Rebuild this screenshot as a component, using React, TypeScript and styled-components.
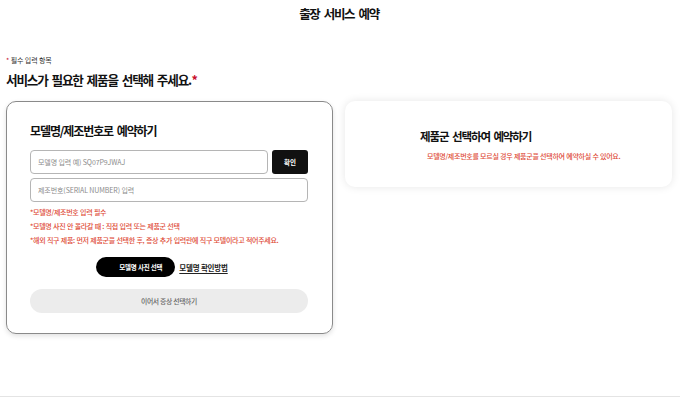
import React from "react";
import styled, { createGlobalStyle } from "styled-components";

const Global = createGlobalStyle`
  html, body { margin: 0; padding: 0; background: #fff; }
  body { font-family: "Noto Sans CJK KR", "Noto Sans", sans-serif; color: #111; }
  * { box-sizing: border-box; }
`;

const Page = styled.div`
  width: 680px;
  height: 397px;
  border-bottom: 1px solid #e4e4e4;
  display: flex;
  flex-direction: column;
  padding: 0 8px 0 6px;
`;

const PageTitle = styled.h1`
  margin: 0;
  height: 28px;
  line-height: 28px;
  text-align: center;
  font-size: 12.5px;
  font-weight: 700;
  letter-spacing: -1.4px;
  word-spacing: 3px;
  color: #111;
`;

const RequiredNote = styled.div`
  margin-top: 27px;
  font-size: 7px;
  line-height: 10px;
  color: #333;
  letter-spacing: -0.1px;
`;

const Star = styled.span<{ $gap?: number }>`
  color: #c8102e;
  margin-left: ${(p) => p.$gap ?? 0}px;
`;

const Heading = styled.h2`
  margin: 6px 0 0;
  font-size: 12.6px;
  line-height: 18px;
  font-weight: 700;
  letter-spacing: -1.2px;
  word-spacing: 2.3px;
  color: #111;
`;

const Period = styled.span`
  letter-spacing: -0.5px;
`;

const CardRow = styled.div`
  margin-top: 12px;
  display: flex;
  gap: 12px;
  align-items: flex-start;
`;

const ModelCard = styled.section`
  width: 327px;
  border: 1px solid #8a8a8a;
  border-radius: 10px;
  padding: 21px 24px 20px 23px;
  box-shadow: 0 2px 5px rgba(0, 0, 0, 0.12);
  display: flex;
  flex-direction: column;
`;

const GroupCard = styled.section`
  width: 327px;
  height: 86px;
  border-radius: 10px;
  box-shadow: 0 0 8px rgba(0, 0, 0, 0.1);
  padding: 27px 0 0 75px;
  display: flex;
  flex-direction: column;
`;

const CardTitle = styled.h3<{ $size?: number }>`
  margin: 0;
  font-size: ${(p) => p.$size ?? 12}px;
  line-height: 16px;
  font-weight: 700;
  letter-spacing: -1.1px;
  word-spacing: 2px;
  color: #111;
`;

const InputRow = styled.div<{ $mt: number }>`
  margin-top: ${(p) => p.$mt}px;
  display: flex;
  gap: 4px;
`;

const TextInput = styled.input`
  flex: 1;
  min-width: 0;
  height: 24px;
  border: 1px solid #b5b5b5;
  border-radius: 4px;
  padding: 0 7px;
  font-family: inherit;
  font-size: 7px;
  letter-spacing: -0.1px;
  color: #333;
  outline: none;
  &::placeholder { color: #8c8c8c; }
`;

const ConfirmButton = styled.button`
  width: 36px;
  height: 24px;
  border: none;
  border-radius: 3px;
  background: #111;
  color: #fff;
  font-family: inherit;
  font-size: 6.5px;
  font-weight: 700;
  padding: 0;
`;

const Notes = styled.div`
  margin-top: 3px;
  display: flex;
  flex-direction: column;
`;

const Note = styled.p<{ $indent?: number }>`
  margin: 0 0 0 ${(p) => p.$indent ?? 0}px;
  font-size: 7px;
  line-height: 14px;
  letter-spacing: -0.3px;
  word-spacing: 0.3px;
  color: #de4a36;
  font-weight: 500;
  white-space: nowrap;
`;

const ActionRow = styled.div`
  margin-top: 10px;
  display: flex;
  justify-content: center;
  align-items: center;
  gap: 4px;
  padding-right: 14px;
`;

const PhotoButton = styled.button`
  width: 79px;
  height: 20px;
  border: none;
  border-radius: 10px;
  background: #000;
  color: #fff;
  font-family: inherit;
  font-size: 6.5px;
  font-weight: 700;
  letter-spacing: -0.2px;
  padding: 0 0 0 10px;
`;

const HelpLink = styled.a`
  font-size: 7.5px;
  font-weight: 700;
  letter-spacing: -0.2px;
  color: #222;
  text-decoration: underline;
  text-underline-offset: 1.5px;
`;

const NextButton = styled.button`
  margin-top: 12px;
  width: 100%;
  height: 24px;
  border: none;
  border-radius: 12px;
  background: #ececec;
  color: #666;
  font-family: inherit;
  font-size: 6.8px;
  font-weight: 500;
  letter-spacing: -0.3px;
`;

const GroupSub = styled.div`
  margin-top: 5px;
`;

export default function App() {
  return (
    <>
      <Global />
      <Page>
        <PageTitle>출장 서비스 예약</PageTitle>
        <RequiredNote>
          <Star>*</Star> 필수 입력 항목
        </RequiredNote>
        <Heading>
          서비스가 필요한 제품을 선택해 주세요<Period>.</Period>
          <Star>*</Star>
        </Heading>
        <CardRow>
          <ModelCard>
            <CardTitle>모델명/제조번호로 예약하기</CardTitle>
            <InputRow $mt={11}>
              <TextInput placeholder="모델명 입력 예) SQ07P9JWAJ" />
              <ConfirmButton>확인</ConfirmButton>
            </InputRow>
            <InputRow $mt={4}>
              <TextInput placeholder="제조번호(SERIAL NUMBER) 입력" />
            </InputRow>
            <Notes>
              <Note>*모델명/제조번호 입력 필수</Note>
              <Note>*모델명 사진 안 올라갈 때 : 직접 입력 또는 제품군 선택</Note>
              <Note>
                *해외 직구 제품: 먼저 제품군을 선택한 후, 증상 추가 입력란에 직구 모델이라고 적어주세요.
              </Note>
            </Notes>
            <ActionRow>
              <PhotoButton>모델명 사진 선택</PhotoButton>
              <HelpLink>모델명 확인방법</HelpLink>
            </ActionRow>
            <NextButton>이어서 증상 선택하기</NextButton>
          </ModelCard>
          <GroupCard>
            <CardTitle $size={11.5}>제품군 선택하여 예약하기</CardTitle>
            <GroupSub>
              <Note $indent={7}>
                모델명/제조번호를 모르실 경우 제품군을 선택하여 예약하실 수 있어요.
              </Note>
            </GroupSub>
          </GroupCard>
        </CardRow>
      </Page>
    </>
  );
}
